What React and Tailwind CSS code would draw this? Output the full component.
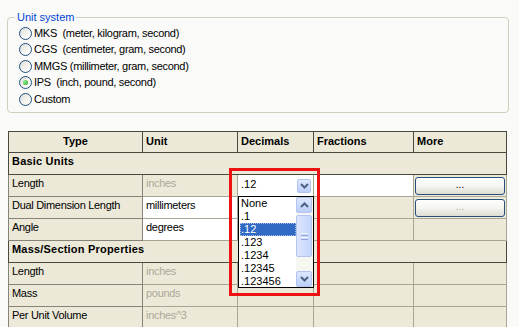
import React from 'react';

const systems = [
  { label: 'MKS  (meter, kilogram, second)' },
  { label: 'CGS  (centimeter, gram, second)' },
  { label: 'MMGS (millimeter, gram, second)' },
  { label: 'IPS  (inch, pound, second)', checked: true },
  { label: 'Custom' },
];

const decimals = ['None', '.1', '.12', '.123', '.1234', '.12345', '.123456'];

// xp style radio button
const Radio = ({ checked }) => (
  <span className="relative inline-block w-[13px] h-[13px] rounded-full border border-[#1c5180] bg-gradient-to-br from-[#dcdad5] via-[#f4f3ee] to-white shrink-0">
    {checked && (
      <span className="absolute left-[3px] top-[3px] w-[5px] h-[5px] rounded-full bg-[radial-gradient(circle_at_35%_35%,#8ef08e,#21a121)]" />
    )}
  </span>
);

const Chevron = ({ up }) => (
  <svg width="9" height="6" viewBox="0 0 9 6">
    <path
      d={up ? 'M1 5 L4.5 1.5 L8 5' : 'M1 1 L4.5 4.5 L8 1'}
      fill="none"
      stroke="#4d6185"
      strokeWidth="2"
    />
  </svg>
);

const ArrowButton = ({ up, className = '' }) => (
  <div
    className={`flex items-center justify-center rounded-[2px] border border-[#b2c4f0] bg-gradient-to-b from-[#dde7fd] to-[#bccff9] ${className}`}
  >
    <Chevron up={up} />
  </div>
);

const MoreButton = ({ disabled }) => (
  <div
    className={`mx-auto h-[18px] w-[90px] rounded-[3px] border border-[#25507c] bg-gradient-to-b from-white via-[#f4f4f0] to-[#dedcd2] flex items-center justify-center text-[10px] leading-none pb-[2px] ${disabled ? 'text-[#aca899]' : 'text-black'}`}
  >
    ...
  </div>
);

const data = 'h-[22px] border border-[#a8a594] px-[3px] pt-[1px] align-top leading-[14px] tracking-[-0.3px]';
const typeCell = 'h-[22px] border border-[#85837a] px-[3px] pt-[1px] align-top leading-[14px] tracking-[-0.3px]';
const section = 'h-[22px] border border-[#4a4940] px-[3px] pt-[1px] align-top leading-[14px] font-bold tracking-[0.2px]';
const head = 'h-[21px] border border-[#4a4940] px-[3px] pt-[2px] align-top leading-[14px]';

const App = () => {
  return (
    <div
      className="w-[519px] h-[327px] overflow-hidden bg-[#fafaf8] text-[11px] text-black pt-[11px]"
      style={{ fontFamily: '"Liberation Sans", Arial, sans-serif' }}
    >
      <fieldset className="ml-[7px] w-[502px] h-[102px] rounded-[4px] border border-[#d0d0bf] pl-[7px] pr-2 pb-[5px]">
        <legend className="px-[2px] text-[#0046d5] leading-[13px]">Unit system</legend>
        <div className="ml-[4px] mt-[1px]">
          {systems.map(s => (
            <div key={s.label} className="flex items-center gap-[2px] h-[16.5px]">
              <Radio checked={s.checked} />
              <span className="whitespace-pre leading-none tracking-[-0.3px]">{s.label}</span>
            </div>
          ))}
        </div>
      </fieldset>

      <div className="relative ml-[8px] mt-[18px] w-[499px]">
        <table className="table-fixed border-collapse w-[498px] bg-[#ece9d8]">
          <colgroup>
            <col className="w-[134px]" />
            <col className="w-[95px]" />
            <col className="w-[76px]" />
            <col className="w-[100px]" />
            <col className="w-[93px]" />
          </colgroup>
          <thead>
            <tr className="font-bold">
              <td className={`${head} text-center`}>Type</td>
              <td className={head}>Unit</td>
              <td className={head}>Decimals</td>
              <td className={head}>Fractions</td>
              <td className={head}>More</td>
            </tr>
          </thead>
          <tbody>
            <tr>
              <td colSpan={5} className={section}>Basic Units</td>
            </tr>
            <tr>
              <td className={typeCell}>Length</td>
              <td className={`${data} text-[#aca899]`}>inches</td>
              <td className="h-[22px] border border-[#a8a594] px-[3px] bg-white align-middle">
                <div className="flex items-center justify-between">
                  <span className="-mt-[2px]">.12</span>
                  <ArrowButton className="w-[14px] h-[14px] -mr-[1px]" />
                </div>
              </td>
              <td className={`${data} bg-white`}></td>
              <td className="h-[22px] border border-[#a8a594] align-middle">
                <MoreButton />
              </td>
            </tr>
            <tr>
              <td className={typeCell}>Dual Dimension Length</td>
              <td className={`${data} bg-white`}>millimeters</td>
              <td className={data}></td>
              <td className={data}></td>
              <td className="h-[22px] border border-[#a8a594] align-middle">
                <MoreButton disabled />
              </td>
            </tr>
            <tr>
              <td className={typeCell}>Angle</td>
              <td className={`${data} bg-white`}>degrees</td>
              <td className={data}></td>
              <td className={data}></td>
              <td className={data}></td>
            </tr>
            <tr>
              <td colSpan={5} className={section}>Mass/Section Properties</td>
            </tr>
            <tr>
              <td className={typeCell}>Length</td>
              <td className={`${data} text-[#aca899]`}>inches</td>
              <td className={data}></td>
              <td className={data}></td>
              <td className={data}></td>
            </tr>
            <tr>
              <td className={typeCell}>Mass</td>
              <td className={`${data} text-[#aca899]`}>pounds</td>
              <td className={data}></td>
              <td className={data}></td>
              <td className={data}></td>
            </tr>
            <tr>
              <td className={typeCell}>Per Unit Volume</td>
              <td className={`${data} text-[#aca899]`}>inches^3</td>
              <td className={data}></td>
              <td className={data}></td>
              <td className={data}></td>
            </tr>
          </tbody>
        </table>

        {/* open dropdown list */}
        <div className="absolute left-[230px] top-[65px] w-[76px] h-[92px] border border-black bg-white flex">
          <div className="flex-1 pl-[1px]">
            {decimals.map(d => (
              <div
                key={d}
                className={`h-[13px] leading-[13px] pl-[1px] ${d === '.12' ? 'bg-[#316ac5] text-white outline-1 outline-dotted outline-[#a9bde6] -outline-offset-1' : ''}`}
              >
                {d}
              </div>
            ))}
          </div>
          <div className="w-[17px] flex flex-col bg-[#f7f7f2] pr-[1px]">
            <ArrowButton up className="w-[16px] h-[16px]" />
            <div className="mt-[2px] h-[42px] w-[16px] rounded-[2px] border border-[#b2c4f0] bg-gradient-to-r from-[#dbe5fd] to-[#c4d5fb] flex flex-col items-center justify-center gap-[1px]">
              <span className="block w-[7px] h-[1px] bg-[#eef3fe]" />
              <span className="block w-[7px] h-[1px] bg-[#8ca5dd]" />
              <span className="block w-[7px] h-[1px] bg-[#eef3fe]" />
              <span className="block w-[7px] h-[1px] bg-[#8ca5dd]" />
            </div>
            <div className="flex-1" />
            <ArrowButton className="w-[16px] h-[16px]" />
          </div>
        </div>

        {/* red highlight frame */}
        <div className="absolute left-[221px] top-[37px] w-[91px] h-[128px] border-[3px] border-[#ee1111]" />
      </div>
    </div>
  );
};

export default App;
